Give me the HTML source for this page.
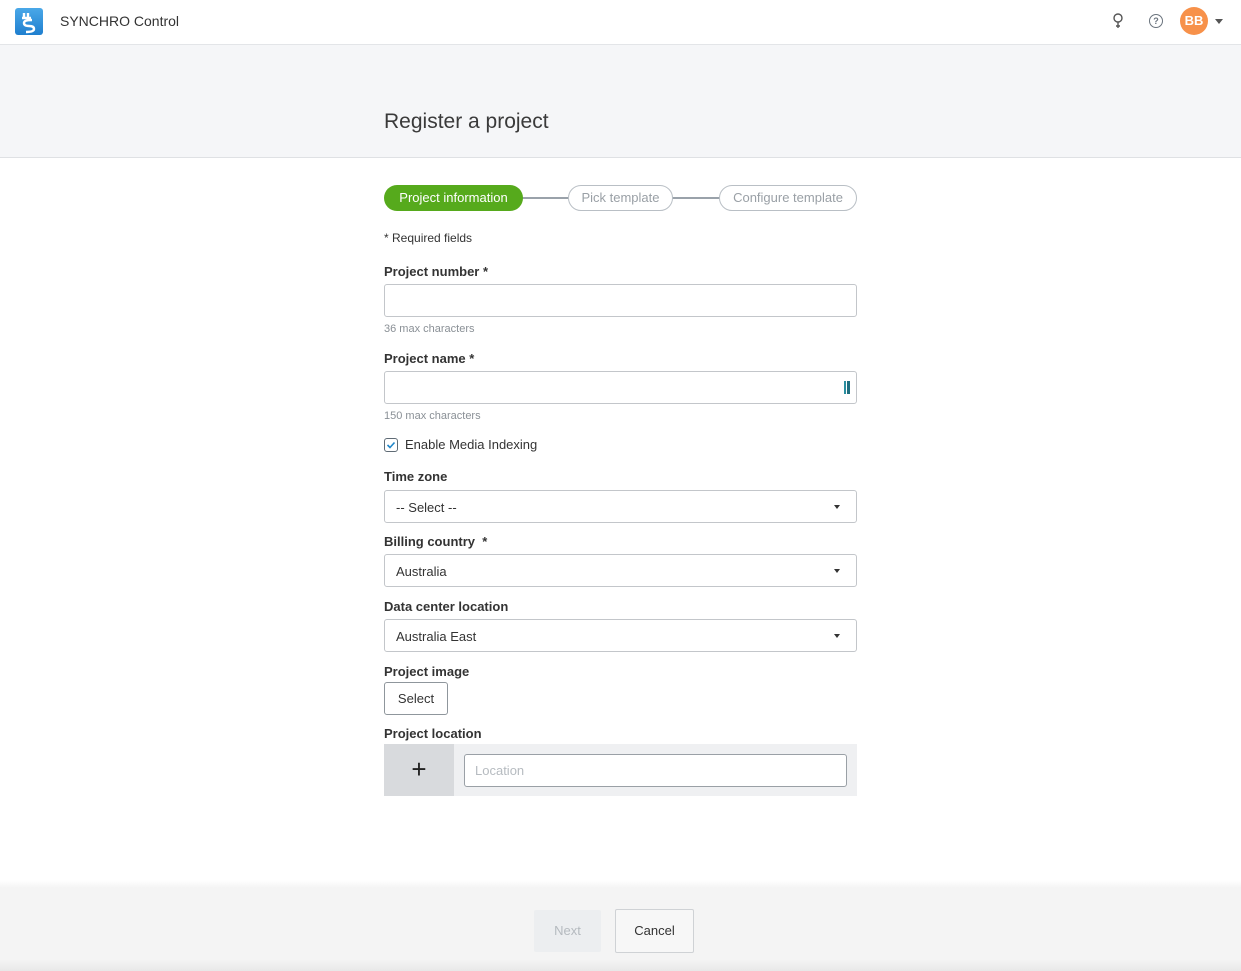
<!DOCTYPE html>
<html><head><meta charset="utf-8"><style>
*{box-sizing:border-box;margin:0;padding:0}
body{width:1241px;height:971px;position:relative;overflow:hidden;background:#fff;font-family:"Liberation Sans",sans-serif;color:#333;font-size:13px}
.a{position:absolute}
.top{left:0;top:0;width:1241px;height:45px;background:#fff;border-bottom:1px solid #e3e5e8}
.band{left:0;top:45px;width:1241px;height:113px;background:#f5f6f8;border-bottom:1px solid #dfe1e4}
.lbl{left:384px;font-weight:bold;font-size:13px;color:#333}
.inp{left:384px;width:473px;height:33px;border:1px solid #c3c6ca;border-radius:3px;background:#fff}
.hint{left:384px;font-size:11px;color:#8a9096}
.sel{font-size:13px;padding:9px 0 0 11px;color:#333}
.caret{position:absolute;right:16px;top:14px;border-left:3.5px solid transparent;border-right:3.5px solid transparent;border-top:4px solid #333}
.pill{height:26px;border-radius:13px;font-size:13px;text-align:center;line-height:24px}
</style></head><body>
<div class="a top"></div>
<div class="a" style="left:15px;top:8px;width:28px;height:27px;border-radius:3px;background:linear-gradient(#4aa8e8,#1f7fcf)">
<svg width="28" height="27" viewBox="0 0 28 27"><path d="M9 5v5M13 5v5M7 10h9M17 12c-6 0-8 1-8 3s2 3 5 3 5 1 5 3-2 3-8 3" stroke="#fff" stroke-width="2.4" fill="none"/></svg></div>
<div class="a" style="left:60px;top:13px;font-size:14px;color:#333">SYNCHRO Control</div>
<svg class="a" style="left:1111px;top:12px" width="14" height="18" viewBox="0 0 14 18"><circle cx="7" cy="6" r="4" fill="none" stroke="#555" stroke-width="1.4"/><path d="M7 10v6M5 14h4" stroke="#555" stroke-width="1.4"/></svg>
<div class="a" style="left:1149px;top:14px;width:14px;height:14px;border:1.3px solid #6a737d;border-radius:50%;font-size:9px;text-align:center;line-height:12px;color:#6a737d;font-weight:bold">?</div>
<div class="a" style="left:1180px;top:7px;width:28px;height:28px;border-radius:50%;background:#f7914a;color:#fff;font-weight:bold;font-size:13px;text-align:center;line-height:28px">BB</div>
<div class="a" style="left:1215px;top:19px;border-left:4px solid transparent;border-right:4px solid transparent;border-top:5px solid #555"></div>
<div class="a band"></div>
<div class="a" style="left:384px;top:110px;font-size:21px;color:#3a3a3a;font-weight:300">Register a project</div>
<div class="a" style="left:522px;top:197px;width:200px;height:2px;background:#9aa2aa"></div>
<div class="a" style="left:672px;top:197px;width:48px;height:2px;background:#9aa2aa"></div>
<div class="a pill" style="left:384px;top:185px;width:139px;background:#56aa1c;color:#fff;line-height:26px">Project information</div>
<div class="a pill" style="left:568px;top:185px;width:105px;border:1px solid #b9bfc5;background:#fff;color:#9aa0a6">Pick template</div>
<div class="a pill" style="left:719px;top:185px;width:138px;border:1px solid #b9bfc5;background:#fff;color:#9aa0a6">Configure template</div>
<div class="a" style="left:384px;top:231px;font-size:12px">* Required fields</div>
<div class="a lbl" style="top:264px">Project number *</div>
<div class="a inp" style="top:284px"></div>
<div class="a hint" style="top:323px">36 max characters</div>
<div class="a lbl" style="top:351px">Project name *</div>
<div class="a inp" style="top:371px"><div style="position:absolute;right:6px;top:9px;width:3px;height:13px;background:#1f6f80"></div><div style="position:absolute;right:10px;top:9px;width:2px;height:13px;background:#2b8fa0"></div></div>
<div class="a hint" style="top:410px">150 max characters</div>
<div class="a" style="left:384px;top:438px;width:14px;height:14px;border:1.3px solid #5f6b75;border-radius:3px"><svg width="12" height="12" style="position:absolute;left:0;top:0"><path d="M2.5 6l2.5 2.5 4.5-5" stroke="#1f86c9" stroke-width="1.6" fill="none"/></svg></div>
<div class="a" style="left:405px;top:437px;font-size:13px">Enable Media Indexing</div>
<div class="a lbl" style="top:469px">Time zone</div>
<div class="a inp sel" style="top:490px">-- Select --<div class="caret"></div></div>
<div class="a lbl" style="top:534px">Billing country&nbsp; *</div>
<div class="a inp sel" style="top:554px">Australia<div class="caret"></div></div>
<div class="a lbl" style="top:599px">Data center location</div>
<div class="a inp sel" style="top:619px">Australia East<div class="caret"></div></div>
<div class="a lbl" style="top:664px">Project image</div>
<div class="a" style="left:384px;top:682px;width:64px;height:33px;border:1px solid #8f969c;border-radius:3px;text-align:center;line-height:31px">Select</div>
<div class="a lbl" style="top:726px">Project location</div>
<div class="a" style="left:384px;top:744px;width:473px;height:52px;background:#eff0f2"></div>
<div class="a" style="left:384px;top:744px;width:70px;height:52px;background:#d8dadd;text-align:center;font-size:26px;line-height:50px;color:#222">+</div>
<div class="a" style="left:464px;top:754px;width:383px;height:33px;border:1px solid #9aa0a6;border-radius:3px;background:#fff;color:#b6bbc0;padding:8px 10px">Location</div>
<div class="a" style="left:0;top:880px;width:1241px;height:91px;background:linear-gradient(#fff 0,#f4f4f4 8px,#f4f4f4 80px,#e8e8e8 91px)"></div>
<div class="a" style="left:534px;top:910px;width:67px;height:42px;background:#eceef0;border-radius:2px;color:#b5babf;text-align:center;line-height:42px">Next</div>
<div class="a" style="left:615px;top:909px;width:79px;height:44px;border:1px solid #cfd2d5;border-radius:2px;background:#f7f7f7;text-align:center;line-height:42px;color:#333">Cancel</div>
</body></html>
